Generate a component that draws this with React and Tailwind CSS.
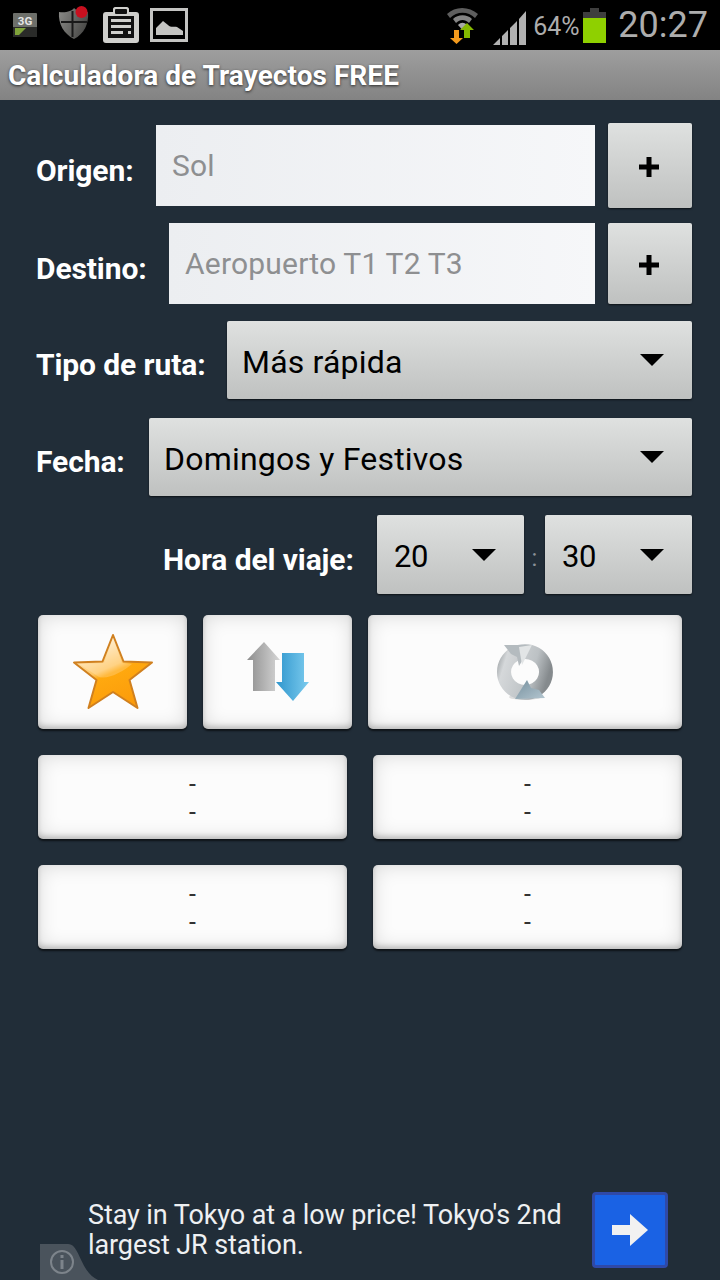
// Calculadora de Trayectos: pantalla principal
const GRAY_BTN = "bg-gradient-to-b from-[#dfe1e0] to-[#bfc1c0] rounded-[2px] shadow-[0_1px_2px_rgba(0,0,0,0.6)]";
const WHITE_BTN = "rounded-[5px] bg-[#fcfcfc] shadow-[inset_0_-3px_5px_rgba(0,0,0,0.18),inset_0_0_20px_rgba(0,0,0,0.15),0_2px_2px_rgba(0,0,0,0.6)] flex items-center justify-center";
const LABEL = "text-[30px] font-bold text-white leading-none tracking-[-0.1px] relative top-[5px]";

function Caret() {
  return (
    <svg width="26" height="14" viewBox="0 0 26 14" className="shrink-0">
      <path d="M1 1H25L13 13Z" fill="#000" />
    </svg>
  );
}

function Select({ value, className, textCls = "text-[32px] tracking-[0.2px]", pad = "pl-[15px] pr-[27px]" }) {
  return (
    <div className={`${GRAY_BTN} ${className} ${pad} flex items-center justify-between text-black`}>
      <span className={`${textCls} leading-none relative top-[2px]`}>{value}</span>
      <Caret />
    </div>
  );
}

function Plus({ className }) {
  return (
    <div className={`${GRAY_BTN} ${className} w-[84px] flex items-center justify-center pt-[3px] pr-[2px]`}>
      <svg width="20" height="20" viewBox="0 0 20 20"><path d="M7.5 0h5v7.5H20v5h-7.5V20h-5v-7.5H0v-5h7.5z" fill="#000" /></svg>
    </div>
  );
}

function Field({ value, className }) {
  return (
    <div className={`bg-gradient-to-r from-[#eceef1] to-[#f6f7f9] flex items-center pl-[16px] text-[30px] tracking-[0.2px] text-[#8e8f91] ${className}`}>
      {value}
    </div>
  );
}

function Slot({ className }) {
  return (
    <div className={`${WHITE_BTN} ${className} h-[84px] flex-col pt-[3px] text-[25px] leading-[28px] text-[#333]`}>
      <span>-</span>
      <span>-</span>
    </div>
  );
}

function StatusBar() {
  return (
    <div className="h-[50px] bg-black flex items-center shrink-0 relative">
      <div className="flex items-center pl-[13px]">
        <svg width="24" height="24" viewBox="0 0 24 24">
          <rect width="24" height="24" rx="1" fill="#6d6f6a" />
          <rect y="14" width="24" height="10" fill="#2a2b29" />
          <path d="M2 22V15H13L6 22Z" fill="#7fa33a" />
          <text x="12" y="12" textAnchor="middle" fontSize="11.5" fontWeight="700" fill="#e4e4e4" fontFamily="Roboto, sans-serif">3G</text>
        </svg>
        <svg width="32" height="36" viewBox="0 0 32 36" className="ml-[21px] mt-[-2px]">
          <defs>
            <linearGradient id="shield" x1="0" x2="1" y1="0" y2="0.4">
              <stop offset="0" stopColor="#8b8b88" />
              <stop offset="1" stopColor="#4b4b49" />
            </linearGradient>
          </defs>
          <path d="M1 6C8 7 14 5 16 2C19 5 24 7 30 6C31 18 26 28 16 33C6 28 0 18 1 6Z" fill="url(#shield)" />
          <path d="M14.5 5V31M3 16H29" stroke="#191919" strokeWidth="2" />
          <circle cx="23.5" cy="6" r="6" fill="#c8101f" />
        </svg>
        <svg width="36" height="36" viewBox="0 0 36 36" className="ml-[13px]">
          <path d="M3 5H10V2C10 1 11 0 12 0H24C25 0 26 1 26 2V5H33C35 5 36 6 36 8V33C36 35 35 36 33 36H3C1 36 0 35 0 33V8C0 6 1 5 3 5Z" fill="#cfcfcc" />
          <rect x="12" y="2" width="12" height="5" rx="1" fill="#111" />
          <rect x="5" y="9" width="26" height="22" fill="#111" />
          <path d="M8 12H28V15H8ZM8 18H28V21H8ZM8 24H20V27H8ZM25 24H28V27H25Z" fill="#cfcfcc" />
        </svg>
        <svg width="38" height="34" viewBox="0 0 38 34" className="ml-[11px]">
          <rect x="1.5" y="1.5" width="35" height="31" fill="none" stroke="#c4c4c2" strokeWidth="3" />
          <path d="M6 27V20L13 13L18 17C21 20 24 18 27 19L33 23V27Z" fill="#c4c4c2" />
        </svg>
      </div>
      <div className="flex-1" />
      <svg width="34" height="38" viewBox="0 0 34 38" className="mr-[13px]">
        <path d="M1 8C9 0 23 0 32 8L29 12C22 5 11 5 4 12Z" fill="#5e5e5e" />
        <path d="M7 13C12 8 21 8 26 13L23 17C19 13 14 13 10 17Z" fill="#848484" />
        <path d="M12 19C15 16 18 16 21 19L16.500 24Z" fill="#a8a8a8" />
        <path d="M8 24H13V32H17L10.500 38L4 32H8Z" fill="#f39a1d" />
        <path d="M17 33V25H13L20 18L27 25H23V33Z" fill="#86b800" transform="translate(1 -1)" />
      </svg>
      <svg width="33" height="34" viewBox="0 0 33 34" className="mr-[7px] mt-[6px]">
        <path d="M0 34L7 27V34ZM9 25L15 19V34H9ZM17 17L24 10V34H17ZM26 8L33 0V34H26Z" fill="#b1b1b1" />
      </svg>
      <span className="text-[25px] text-[#adadad] leading-none mt-[2px] w-[46px] tracking-[-0.1px]">64%</span>
      <div className="ml-[4px] mr-[12px] mt-[1px] flex flex-col items-center w-[23px]">
        <div className="w-[9px] h-[4px] bg-[#3e3e3e]" />
        <div className="w-[23px] h-[6px] bg-[#3e3e3e]" />
        <div className="w-[23px] h-[25px] bg-[#8fd000]" />
      </div>
      <span className="text-[36px] text-[#adadad] leading-none mr-[12px]">20:27</span>
    </div>
  );
}

export default function App() {
  return (
    <div className="w-[720px] h-[1280px] bg-[#212d38] flex flex-col relative overflow-hidden font-['Roboto',sans-serif]">
      <StatusBar />
      <div className="h-[50px] shrink-0 bg-gradient-to-b from-[#9e9e9e] to-[#838383] flex items-center pl-[8px] pt-[1px]">
        <span className="text-[28px] font-bold text-white leading-none tracking-[0.05px] [text-shadow:0_1px_3px_rgba(0,0,0,0.7)]">Calculadora de Trayectos FREE</span>
      </div>

      <div className="pl-[36px] pr-[28px] flex flex-col">
        <div className="flex items-center mt-[23px] h-[85px]">
          <span className={`${LABEL} w-[120px]`}>Origen:</span>
          <Field value="Sol" className="w-[439px] h-[81px]" />
          <Plus className="h-[85px] ml-[13px]" />
        </div>
        <div className="flex items-center mt-[15px] h-[81px]">
          <span className={`${LABEL} w-[133px]`}>Destino:</span>
          <Field value="Aeropuerto T1 T2 T3" className="w-[426px] h-[81px]" />
          <Plus className="h-[81px] ml-[13px]" />
        </div>
        <div className="flex items-center mt-[17px]">
          <span className={`${LABEL} w-[191px]`}>Tipo de ruta:</span>
          <Select value="Más rápida" className="w-[465px] h-[78px]" />
        </div>
        <div className="flex items-center mt-[19px]">
          <span className={`${LABEL} w-[113px]`}>Fecha:</span>
          <Select value="Domingos y Festivos" className="w-[543px] h-[78px]" />
        </div>
        <div className="flex items-center mt-[19px] pl-[127px]">
          <span className={`${LABEL} w-[214px]`}>Hora del viaje:</span>
          <Select value="20" textCls="text-[31px] tracking-[-0.3px]" pad="pl-[17px] pr-[27px]" className="w-[147px] h-[79px]" />
          <span className="w-[21px] text-center text-[24px] text-[#8a9097] leading-none mt-[6px]">:</span>
          <Select value="30" textCls="text-[31px] tracking-[-0.3px]" pad="pl-[17px] pr-[27px]" className="w-[147px] h-[79px]" />
        </div>

        <div className="flex gap-[16px] mt-[21px] ml-[2px]">
          <div className={`${WHITE_BTN} w-[149px] h-[114px]`}>
            <svg width="82" height="78" viewBox="0 0 82 78">
              <defs>
                <linearGradient id="star" x1="0.25" y1="0.05" x2="0.7" y2="1">
                  <stop offset="0" stopColor="#fff3dc" />
                  <stop offset="0.42" stopColor="#ffc765" />
                  <stop offset="0.5" stopColor="#ffa90f" />
                  <stop offset="1" stopColor="#fb9a0a" />
                </linearGradient>
              </defs>
              <path d="M41 2L51.500 28.500L80 29.500L57.500 47L65.500 75L41 59L16.500 75L24.500 47L2 29.500L30.500 28.500Z" fill="url(#star)" stroke="#d0801f" strokeWidth="2" strokeLinejoin="round" />
              <path d="M41 5L32 30L7 31L27 44C36 47 52 38 60 31L50 30Z" fill="#fff" opacity="0.2" />
            </svg>
          </div>
          <div className={`${WHITE_BTN} w-[149px] h-[114px]`}>
            <svg width="62" height="60" viewBox="0 0 62 60">
              <defs>
                <linearGradient id="up" x1="0" x2="1" y1="0" y2="0">
                  <stop offset="0" stopColor="#8d8d8d" />
                  <stop offset="1" stopColor="#d6d6d6" />
                </linearGradient>
                <linearGradient id="down" x1="0" x2="1" y1="0" y2="0">
                  <stop offset="0" stopColor="#2f96cd" />
                  <stop offset="1" stopColor="#7ccbee" />
                </linearGradient>
              </defs>
              <path d="M17 0L33 18H28V49H6V18H0Z" fill="url(#up)" />
              <path d="M35 11H57V40H62L46 59L29 40H35Z" fill="url(#down)" />
            </svg>
          </div>
          <div className={`${WHITE_BTN} w-[314px] h-[114px]`}>
            <svg width="60" height="60" viewBox="0 0 60 60">
              <defs>
                <linearGradient id="ring" x1="0" x2="1" y1="0" y2="0.3">
                  <stop offset="0" stopColor="#858b8e" />
                  <stop offset="0.22" stopColor="#d5d8da" />
                  <stop offset="0.72" stopColor="#bcc1c4" />
                  <stop offset="1" stopColor="#858a8d" />
                </linearGradient>
                <linearGradient id="ringBottom" x1="0" x2="1" y1="0" y2="1">
                  <stop offset="0" stopColor="#76909e" />
                  <stop offset="1" stopColor="#b4c6d0" />
                </linearGradient>
              </defs>
              <ellipse cx="30" cy="55" rx="16" ry="3" fill="#000" opacity="0.12" />
              <path d="M30 2A28 28 0 1 1 29.900 2ZM30 17A14 13 0 1 0 30.100 17Z" fill="url(#ring)" fillRule="evenodd" />
              <path d="M9 3L37 3L24 24L22 15L16 12Z" fill="#b4bbbf" />
              <path d="M24 5L37 3L27 23Z" fill="#e2e5e6" />
              <path d="M50 56L20 57L32 38L36 46L44 48Z" fill="url(#ringBottom)" />
            </svg>
          </div>
        </div>

        <div className="flex justify-between mt-[26px] ml-[2px] w-[644px]">
          <Slot className="w-[309px]" />
          <Slot className="w-[309px]" />
        </div>
        <div className="flex justify-between mt-[26px] ml-[2px] w-[644px]">
          <Slot className="w-[309px]" />
          <Slot className="w-[309px]" />
        </div>
      </div>

      <div className="mt-auto mb-[12px] pl-[88px] flex items-center">
        <p className="w-[504px] text-[27px] leading-[30px] tracking-[-0.1px] text-[#eef0f2]">Stay in Tokyo at a low price! Tokyo's 2nd largest JR station.</p>
        <div className="w-[76px] h-[76px] rounded-[4px] bg-[#1a62e4] border-[3px] border-[#2f49a8] flex items-center justify-center">
          <svg width="36" height="32" viewBox="0 0 36 32"><path d="M0 11H18V0L36 16L18 32V21H0Z" fill="#f1f1f1" /></svg>
        </div>
      </div>

      {/* esquina de info del anuncio */}
      <div className="absolute left-[40px] bottom-0">
        <svg width="58" height="36" viewBox="0 0 58 36">
          <path d="M0 0H28C40 0 40 28 58 36H0Z" fill="#4a535c" />
          <circle cx="22" cy="18" r="11" fill="none" stroke="#7d848b" strokeWidth="2" />
          <rect x="20.500" y="16" width="3" height="9" fill="#7d848b" />
          <rect x="20.500" y="11" width="3" height="3" fill="#7d848b" />
        </svg>
      </div>
    </div>
  );
}
